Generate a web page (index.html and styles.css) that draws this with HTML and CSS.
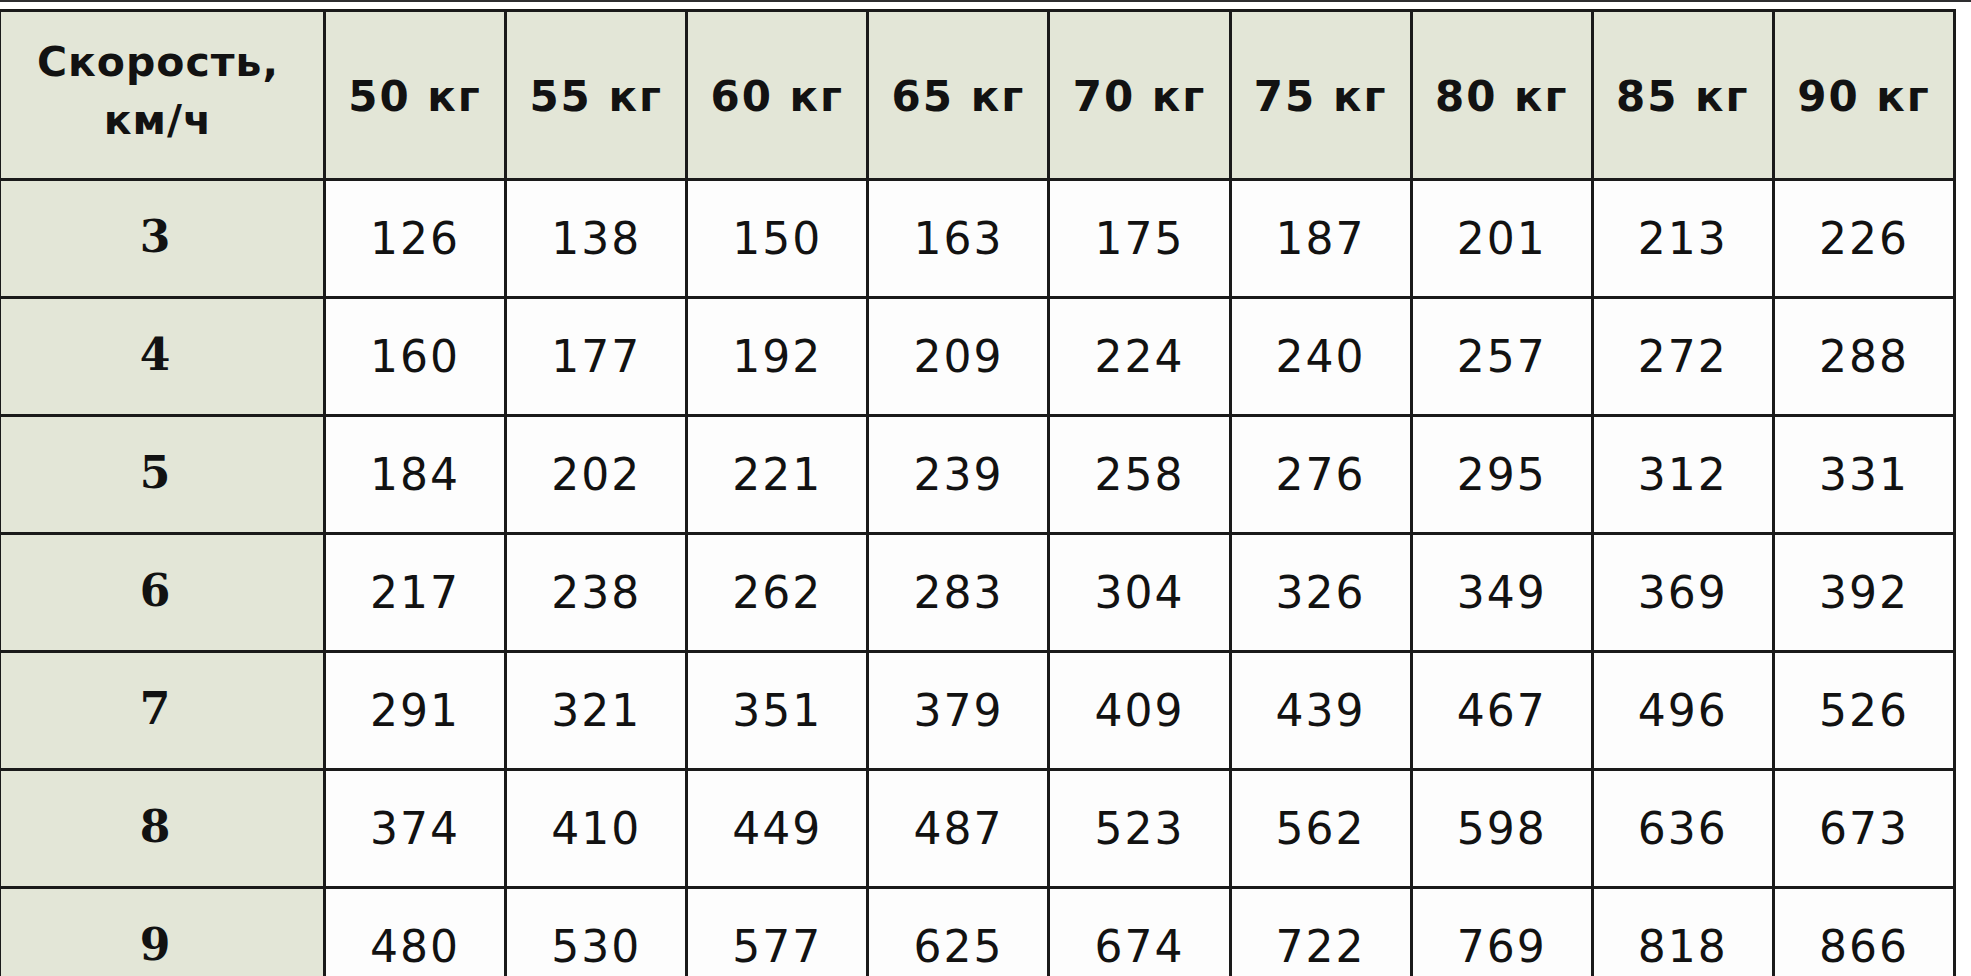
FILE: index.html
```html
<!DOCTYPE html>
<html lang="ru">
<head>
<meta charset="utf-8">
<title>Расход калорий при ходьбе</title>
<link rel="stylesheet" href="styles.css">
</head>
<body>
<div class="topbar"></div>
<div class="wrap">
<table class="kcal">
  <colgroup>
    <col class="c-speed">
    <col span="9">
  </colgroup>
  <thead>
    <tr>
      <th class="speed-head">Скорость,<br>км/ч</th>
      <th>50 кг</th><th>55 кг</th><th>60 кг</th><th>65 кг</th><th>70 кг</th><th>75 кг</th><th>80 кг</th><th>85 кг</th><th>90 кг</th>
    </tr>
  </thead>
  <tbody>
    <tr><th class="speed">3</th><td>126</td><td>138</td><td>150</td><td>163</td><td>175</td><td>187</td><td>201</td><td>213</td><td>226</td></tr>
    <tr><th class="speed">4</th><td>160</td><td>177</td><td>192</td><td>209</td><td>224</td><td>240</td><td>257</td><td>272</td><td>288</td></tr>
    <tr><th class="speed">5</th><td>184</td><td>202</td><td>221</td><td>239</td><td>258</td><td>276</td><td>295</td><td>312</td><td>331</td></tr>
    <tr><th class="speed">6</th><td>217</td><td>238</td><td>262</td><td>283</td><td>304</td><td>326</td><td>349</td><td>369</td><td>392</td></tr>
    <tr><th class="speed">7</th><td>291</td><td>321</td><td>351</td><td>379</td><td>409</td><td>439</td><td>467</td><td>496</td><td>526</td></tr>
    <tr><th class="speed">8</th><td>374</td><td>410</td><td>449</td><td>487</td><td>523</td><td>562</td><td>598</td><td>636</td><td>673</td></tr>
    <tr><th class="speed">9</th><td>480</td><td>530</td><td>577</td><td>625</td><td>674</td><td>722</td><td>769</td><td>818</td><td>866</td></tr>
  </tbody>
</table>
</div>
</body>
</html>
```

FILE: styles.css
```css
html, body {
  margin: 0;
  padding: 0;
  background: #ffffff;
  overflow: hidden;
  height: 976px;
}

.topbar {
  height: 2px;
  background: #2e2e30;
}

.wrap {
  padding-top: 7px;
  padding-left: 0;
}

.kcal {
  border-collapse: collapse;
  table-layout: fixed;
  width: 1958px;
  margin-left: -2px;
  font-family: "DejaVu Sans", Verdana, sans-serif;
  color: #121212;
}

.c-speed {
  width: 325px;
}

.kcal th,
.kcal td {
  border: 3px solid #1a1a1a;
  text-align: center;
  vertical-align: middle;
  padding: 0;
}

.kcal thead tr {
  height: 169px;
}

.kcal tbody tr {
  height: 118px;
}

.kcal thead th {
  background: #e3e6d7;
  font-weight: bold;
  font-size: 42px;
  letter-spacing: 2px;
  padding-top: 2px;
}

.kcal thead th.speed-head {
  font-size: 41px;
  letter-spacing: 1px;
  line-height: 58px;
  padding-right: 8px;
  padding-bottom: 10px;
}

.kcal th.speed {
  background: #e3e6d7;
  font-family: "DejaVu Serif", Georgia, serif;
  font-weight: bold;
  font-size: 44px;
  padding-right: 14px;
  padding-bottom: 4px;
}

.kcal td {
  background: #fdfdfd;
  font-size: 44px;
  letter-spacing: 2px;
}
```
